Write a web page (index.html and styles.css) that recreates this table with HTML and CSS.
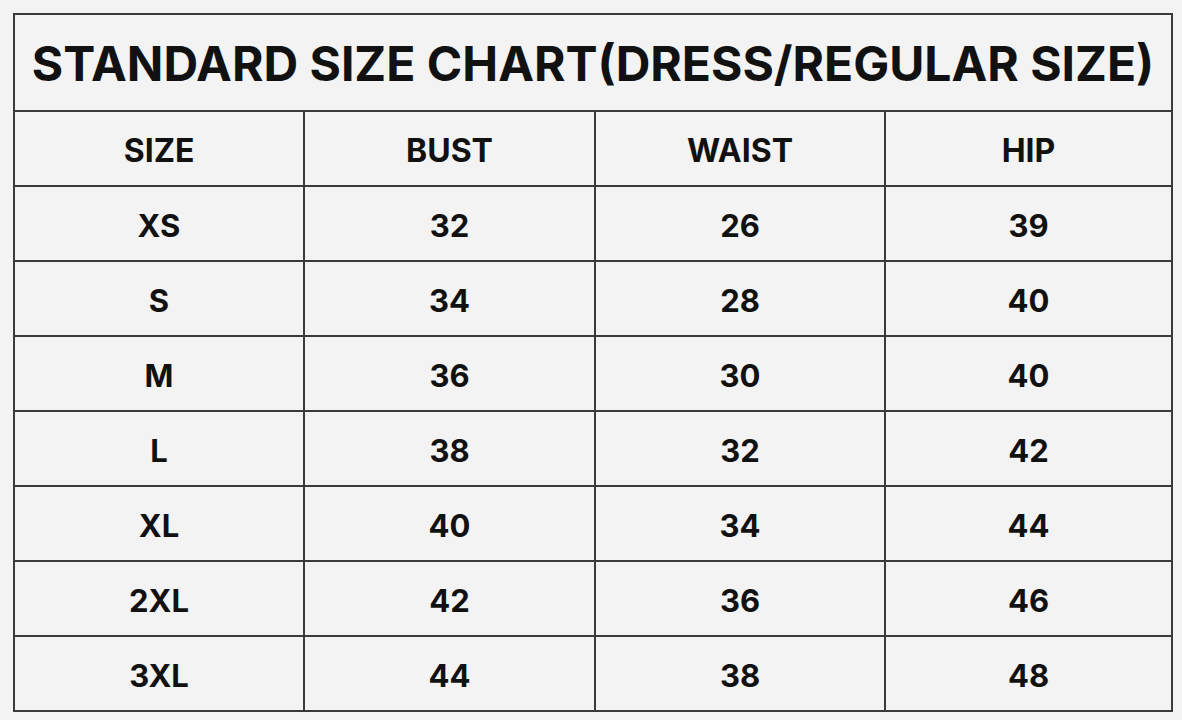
FILE: index.html
```html
<!DOCTYPE html>
<html lang="en">
<head>
<meta charset="utf-8">
<title>Standard Size Chart</title>
<link rel="stylesheet" href="styles.css">
</head>
<body>
<div class="chart">
  <div class="cell title">STANDARD SIZE CHART(DRESS/REGULAR SIZE)</div>
  <div class="cell head">SIZE</div><div class="cell head">BUST</div><div class="cell head">WAIST</div><div class="cell head">HIP</div>
  <div class="cell">XS</div><div class="cell">32</div><div class="cell">26</div><div class="cell">39</div>
  <div class="cell">S</div><div class="cell">34</div><div class="cell">28</div><div class="cell">40</div>
  <div class="cell">M</div><div class="cell">36</div><div class="cell">30</div><div class="cell">40</div>
  <div class="cell">L</div><div class="cell">38</div><div class="cell">32</div><div class="cell">42</div>
  <div class="cell">XL</div><div class="cell">40</div><div class="cell">34</div><div class="cell">44</div>
  <div class="cell">2XL</div><div class="cell">42</div><div class="cell">36</div><div class="cell">46</div>
  <div class="cell">3XL</div><div class="cell">44</div><div class="cell">38</div><div class="cell">48</div>
</div>
</body>
</html>
```
FILE: styles.css
```css
html, body {
  margin: 0;
  padding: 0;
  background: #f3f3f3;
}
body {
  padding: 13px;
  font-family: Inter, "Liberation Sans", sans-serif;
  color: #111;
}
.chart {
  display: grid;
  width: 1160px;
  grid-template-columns: 288px 289px 288px 285px;
  grid-template-rows: 95px repeat(8, 73px);
  gap: 2px;
  padding: 2px;
  background: #3a3a3a;
  box-sizing: border-box;
}
.cell {
  background: #f3f3f3;
  display: flex;
  align-items: center;
  justify-content: center;
  padding-top: 3px;
  font-weight: 700;
  font-size: 31px;
}
.head {
  font-size: 32px;
}
.title {
  grid-column: 1 / -1;
  padding-top: 2px;
  font-size: 48px;
  letter-spacing: 0;
}
```
